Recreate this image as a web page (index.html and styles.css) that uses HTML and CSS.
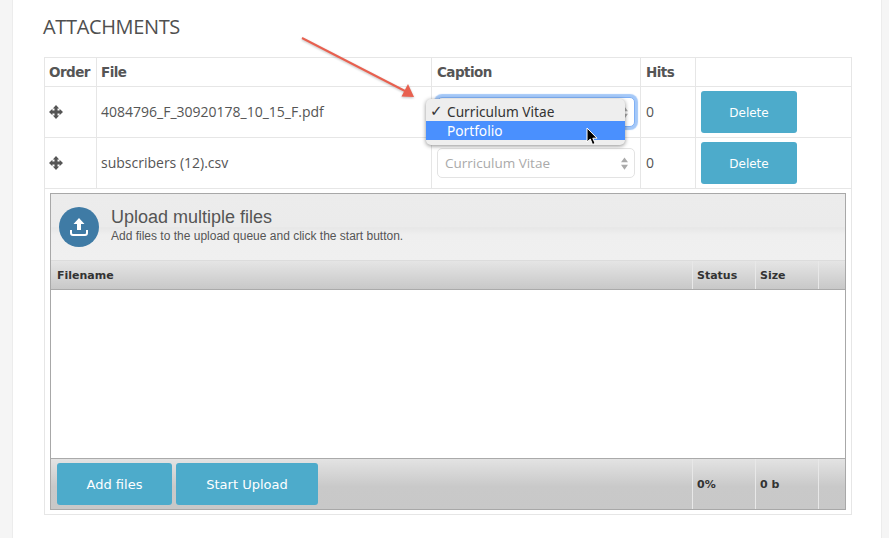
FILE: index.html
```html
<!DOCTYPE html>
<html lang="en">
<head>
<meta charset="utf-8">
<title>Attachments</title>
<link rel="stylesheet" href="styles.css">
</head>
<body>
<div class="page">
  <aside class="strip strip-left"></aside>
  <main class="main">
    <h2 class="title">ATTACHMENTS</h2>
    <table class="attachments">
      <colgroup>
        <col class="c-order"><col class="c-file"><col class="c-caption"><col class="c-hits"><col class="c-action">
      </colgroup>
      <thead>
        <tr class="head-row"><th>Order</th><th>File</th><th>Caption</th><th>Hits</th><th></th></tr>
      </thead>
      <tbody>
        <tr class="file-row">
          <td><svg class="move" viewBox="0 0 14 14"><path d="M7 0 10.200 3.400H8.500V5.500h2.100V3.800L14 7l-3.400 3.200V8.500H8.500v2.100h1.700L7 14l-3.200-3.400h1.700V8.500H3.400v1.700L0 7l3.400-3.200v1.700h2.100V3.400H3.800z"/></svg></td>
          <td>4084796_F_30920178_10_15_F.pdf</td>
          <td>
            <div class="select focused"><svg class="updown" viewBox="0 0 8 14"><path d="M4 0 8 5.500H0zM4 14 0 8.500h8z"/></svg></div>
          </td>
          <td>0</td>
          <td><button class="btn btn-delete">Delete</button></td>
        </tr>
        <tr class="file-row">
          <td><svg class="move" viewBox="0 0 14 14"><path d="M7 0 10.200 3.400H8.500V5.500h2.100V3.800L14 7l-3.400 3.200V8.500H8.500v2.100h1.700L7 14l-3.200-3.400h1.700V8.500H3.400v1.700L0 7l3.400-3.200v1.700h2.100V3.400H3.800z"/></svg></td>
          <td>subscribers (12).csv</td>
          <td>
            <div class="select">Curriculum Vitae<svg class="updown" viewBox="0 0 8 14"><path d="M4 0 8 5.500H0zM4 14 0 8.500h8z"/></svg></div>
          </td>
          <td>0</td>
          <td><button class="btn btn-delete">Delete</button></td>
        </tr>
        <tr>
          <td colspan="5" class="uploader-cell">
            <section class="uploader">
              <header class="up-head">
                <svg class="up-icon" viewBox="0 0 40 40">
                  <circle cx="20" cy="20" r="20" fill="#3f7ba5"/>
                  <path d="M20 11 25.500 17h-3.500v6h-4v-6h-3.500z" fill="#fff"/>
                  <path d="M12 23v3a2 2 0 0 0 2 2h12a2 2 0 0 0 2-2v-3" fill="none" stroke="#fff" stroke-width="2"/>
                </svg>
                <div class="up-text">
                  <div class="up-title">Upload multiple files</div>
                  <div class="up-sub">Add files to the upload queue and click the start button.</div>
                </div>
              </header>
              <div class="grid-row up-cols">
                <div class="cell name">Filename</div>
                <div class="cell">Status</div>
                <div class="cell">Size</div>
                <div class="cell"></div>
              </div>
              <div class="up-list"></div>
              <div class="grid-row up-foot">
                <div class="cell name foot-btns">
                  <button class="btn btn-add">Add files</button>
                  <button class="btn btn-start">Start Upload</button>
                </div>
                <div class="cell">0%</div>
                <div class="cell">0 b</div>
                <div class="cell"></div>
              </div>
            </section>
          </td>
        </tr>
      </tbody>
    </table>
  </main>
  <aside class="strip strip-right"></aside>

  <svg class="arrow" viewBox="0 0 120 66">
    <line x1="1" y1="1" x2="104" y2="54" stroke="#e8604f" stroke-width="2"/>
    <path d="M113 60 100.500 59.500 107 47z" fill="#e8604f"/>
  </svg>

  <div class="popup">
    <div class="opt"><span class="check">✓</span>Curriculum Vitae</div>
    <div class="opt active">Portfolio</div>
  </div>

  <svg class="cursor" viewBox="0 0 12 19">
    <path d="M1 1v14l3.300-3 2.200 5.500 2.600-1.100-2.300-5.200H11z" fill="#000" stroke="#fff" stroke-width="1"/>
  </svg>
</div>
</body>
</html>
```
FILE: styles.css
```css
* { box-sizing: border-box; }
html, body { margin: 0; padding: 0; background: #fff; }
body { font-family: "DejaVu Sans", sans-serif; color: #555; }

.page { position: relative; display: flex; width: 889px; height: 538px; overflow: hidden; }
.strip { background: #f5f5f5; }
.strip-left { width: 13px; border-right: 1px solid #ececec; }
.strip-right { width: 8px; border-left: 1px solid #ececec; }
.main { flex: 1; padding: 14px 29px 0 31px; min-width: 0; }

.title { margin: 0 0 17px -1px; font: 400 20px/26px "Open Sans", sans-serif; color: #4f4f4f; letter-spacing: -0.35px; }

.attachments { border-collapse: collapse; table-layout: fixed; width: 807px; font-family: "Open Sans", sans-serif; font-size: 14px; color: #555; }
.attachments th, .attachments td { border: 1px solid #e6e6e6; padding: 0 5px; text-align: left; vertical-align: middle; }
.attachments tr > :nth-child(-n+2) { padding-left: 4px; }
.c-order { width: 52px; }
.c-file { width: 335px; }
.c-caption { width: 209px; }
.c-hits { width: 55px; }
.c-action { width: 156px; }

.head-row { height: 29px; }
.head-row th { font: 700 13.500px "DejaVu Sans", sans-serif; color: #555; letter-spacing: -0.55px; }
.file-row { height: 51px; }
.file-row td { padding-bottom: 1px; }

.move { display: block; width: 14px; height: 14px; fill: #555; }

.select { position: relative; display: flex; align-items: center; height: 30px; padding: 0 7px; border: 1px solid #e3e3e3; border-radius: 5px; color: #aaa; font-size: 13.500px; background: #fff; }
.select.focused { border-color: #7fb0f5; box-shadow: 0 0 1px 3px #a4c8f8; }
.updown { position: absolute; right: 6px; top: 8px; width: 7px; height: 13px; fill: #aaa; }

.btn { border: 0; border-radius: 3px; background: #4dabcb; color: #fff; font-family: "DejaVu Sans", sans-serif; padding: 0; height: 42px; }
.btn-delete { display: block; width: 96px; padding-top: 2px; font-size: 12px; }
.btn-add { width: 115px; font-size: 13px; font-weight: 500; }
.btn-start { width: 142px; font-size: 13px; font-weight: 500; }

.attachments td.uploader-cell { padding: 4px 5px; height: 326px; }
.uploader { display: flex; flex-direction: column; height: 317px; border: 1px solid #a8a8a8; }

.up-head { display: flex; align-items: center; gap: 12px; height: 67px; padding: 0 8px; border-bottom: 1px solid #dcdcdc;
  background: linear-gradient(#ececec 0, #ebebeb 50%, #e7e7e7 51%, #efefef 62%, #f0f0f0 100%); }
.up-icon { flex: none; width: 40px; height: 40px; }
.up-text { font-family: "Liberation Sans", sans-serif; color: #555; margin-top: -5px; }
.up-title { font-size: 18px; line-height: 22px; }
.up-sub { font-size: 12px; line-height: 16px; }

.grid-row { display: grid; grid-template-columns: 641px 63px 63px 1fr; font: 700 11px "DejaVu Sans", sans-serif; color: #333; }
.cell { display: flex; align-items: center; padding-left: 4px; border-left: 1px solid #e8e8e8; }
.cell.name { padding-left: 6px; border-left: 0; }

.up-cols { height: 29px; border-bottom: 1px solid #aaa; background: linear-gradient(#e5e5e5, #c8c8c8); }
.up-list { flex: 1; background: #fff; }
.up-foot { height: 51px; border-top: 1px solid #aaa; background: linear-gradient(#e3e3e3 0, #c9c9c9 55%, #c8c8c8 100%); }
.foot-btns { gap: 4px; }
.foot-btns .btn { flex: none; }

.arrow { position: absolute; left: 301px; top: 37px; width: 120px; height: 66px; filter: drop-shadow(0 1px 1px rgba(0,0,0,.25)); }
.popup { position: absolute; left: 426px; top: 99px; width: 199px; height: 46px; padding-top: 3px; border-radius: 5px; background: #eee; box-shadow: 0 1px 4px rgba(0,0,0,.45); font: 13.700px/19px "Noto Sans", sans-serif; color: #333; }
.opt { position: relative; height: 19px; padding-left: 21px; }
.opt.active { background: #4a90fe; color: #fff; }
.check { position: absolute; left: 4px; top: 0; font: 700 15px/19px "DejaVu Sans", sans-serif; }
.cursor { position: absolute; left: 586px; top: 127px; width: 12px; height: 19px; }
```
